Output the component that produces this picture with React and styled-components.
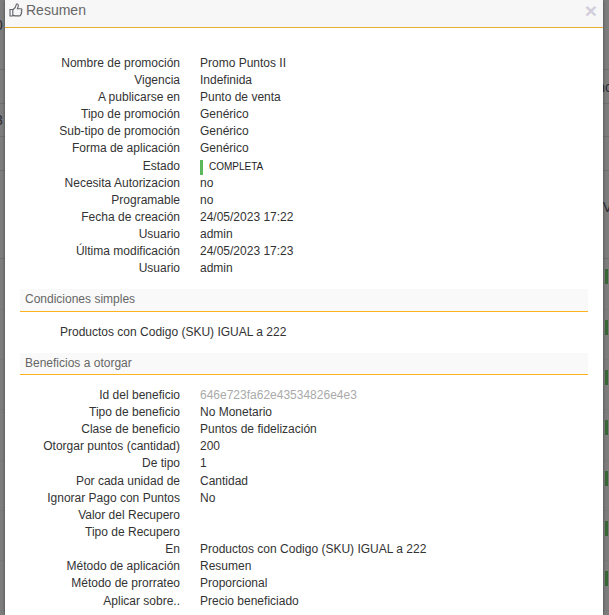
import React from 'react'
import styled, { createGlobalStyle } from 'styled-components'

const GlobalStyle = createGlobalStyle`
  html, body {
    margin: 0;
    padding: 0;
    height: 100%;
    overflow: hidden;
    background: #7d7d7d;
  }
`

const generalRows = [
  ['Nombre de promoción', 'Promo Puntos II'],
  ['Vigencia', 'Indefinida'],
  ['A publicarse en', 'Punto de venta'],
  ['Tipo de promoción', 'Genérico'],
  ['Sub-tipo de promoción', 'Genérico'],
  ['Forma de aplicación', 'Genérico'],
  ['Estado', 'COMPLETA', 'status'],
  ['Necesita Autorizacion', 'no'],
  ['Programable', 'no'],
  ['Fecha de creación', '24/05/2023 17:22'],
  ['Usuario', 'admin'],
  ['Última modificación', '24/05/2023 17:23'],
  ['Usuario', 'admin'],
]

const benefitRows = [
  ['Id del beneficio', '646e723fa62e43534826e4e3', 'muted'],
  ['Tipo de beneficio', 'No Monetario'],
  ['Clase de beneficio', 'Puntos de fidelización'],
  ['Otorgar puntos (cantidad)', '200'],
  ['De tipo', '1'],
  ['Por cada unidad de', 'Cantidad'],
  ['Ignorar Pago con Puntos', 'No'],
  ['Valor del Recupero', ''],
  ['Tipo de Recupero', ''],
  ['En', 'Productos con Codigo (SKU) IGUAL a 222'],
  ['Método de aplicación', 'Resumen'],
  ['Método de prorrateo', 'Proporcional'],
  ['Aplicar sobre..', 'Precio beneficiado'],
]

// the list page behind the dialog, only its edges stay visible
const backRows = [
  { height: 70, left: '0', lift: 20 },
  { height: 34, right: 'nc' },
  { height: 33, left: '3' },
  { height: 34 },
  { height: 88, right: 'V', lift: 16 },
  { height: 51, chip: true },
  { height: 50, chip: true },
  { height: 50, chip: true },
  { height: 51, chip: true },
  { height: 50, chip: true },
  { height: 50, chip: true },
  { height: 50, chip: true },
]

function InfoList({ rows }) {
  return (
    <List>
      {rows.map(([label, value, kind], i) => (
        <Row key={i}>
          <Label>{label}</Label>
          {kind === 'status' ? (
            <Status>{value}</Status>
          ) : (
            <Value $muted={kind === 'muted'}>{value}</Value>
          )}
        </Row>
      ))}
    </List>
  )
}

function ThumbIcon() {
  return (
    <svg width="14" height="14" viewBox="0 0 14 14" fill="none" stroke="#5f6368" strokeWidth="1.1">
      <path d="M1 6.500h2.800v6.500H1z" />
      <path d="M3.800 6.800c1.700-1.100 3.300-3.200 3.500-5.300.1-.9 2-.7 2 1.100 0 1.200-.5 2.300-.9 3.100h3.400c1.300 0 1.500 1.500.7 1.900.6.500.5 1.600-.2 1.900.4.600.2 1.500-.5 1.800.2.800-.3 1.600-1.300 1.600H6.700c-1.100 0-1.700-.5-2.900-.6" />
    </svg>
  )
}

export default function App() {
  return (
    <Page>
      <GlobalStyle />
      <Backdrop>
        {backRows.map((r, i) => (
          <BackRow key={i} $height={r.height} $lift={r.lift} $faint={r.chip}>
            <BackText>{r.left}</BackText>
            {r.chip ? <Chip /> : <BackText $right>{r.right}</BackText>}
          </BackRow>
        ))}
      </Backdrop>
      <Modal>
        <Header>
          <Title><ThumbIcon />Resumen</Title>
          <Close>×</Close>
        </Header>
        <Body>
          <InfoList rows={generalRows} />
          <Section>Condiciones simples</Section>
          <Condition>Productos con Codigo (SKU) IGUAL a 222</Condition>
          <Section $second>Beneficios a otorgar</Section>
          <InfoList rows={benefitRows} />
        </Body>
      </Modal>
    </Page>
  )
}

const Page = styled.div`
  position: relative;
  height: 615px;
  overflow: hidden;
  font-family: "Liberation Sans", Roboto, sans-serif;
`

const Backdrop = styled.div`
  display: flex;
  flex-direction: column;
`

const BackRow = styled.div`
  height: ${(p) => p.$height}px;
  box-sizing: border-box;
  padding-bottom: ${(p) => p.$lift || 0}px;
  display: flex;
  align-items: center;
  justify-content: space-between;
  border-bottom: 1px solid ${(p) => (p.$faint ? '#787878' : '#6f6f6f')};
`

const BackText = styled.span`
  font-size: 14px;
  color: #2c2c33;
  margin-left: ${(p) => (p.$right ? '0' : '-5px')};
  margin-right: ${(p) => (p.$right ? '-3px' : '0')};
`

const Chip = styled.span`
  align-self: flex-start;
  width: 3px;
  height: 15px;
  margin: 10px 1px 0 auto;
  background: #3a6637;
`

const Modal = styled.div`
  position: absolute;
  top: 0;
  left: 5px;
  width: 598px;
  height: 615px;
  background: #fff;
  box-shadow: 0 0 3px rgba(0, 0, 0, 0.45);
  color: #333;
  overflow: hidden;
`

const Header = styled.div`
  height: 25px;
  display: flex;
  align-items: flex-start;
  justify-content: space-between;
  padding: 2px 6px 0 4px;
  background: #f7f7f7;
  border-bottom: 1px solid #e8ae2e;
`

const Title = styled.div`
  display: flex;
  align-items: center;
  gap: 3px;
  font-size: 14px;
  line-height: 16px;
  color: #666;
`

const Close = styled.span`
  font-size: 21px;
  font-weight: 700;
  line-height: 18px;
  color: #d2cedb;
`

const Body = styled.div`
  padding: 26.700px 15px 0;
`

const List = styled.div`
  display: flex;
  flex-direction: column;
`

const Row = styled.div`
  display: grid;
  grid-template-columns: 160px 1fr;
  column-gap: 20px;
  align-items: center;
  font-size: 12px;
  line-height: 1.42857;
`

const Label = styled.div`
  text-align: right;
  white-space: nowrap;
`

const Value = styled.div`
  white-space: nowrap;
  min-height: 17px;
  color: ${(p) => (p.$muted ? '#aaa' : '#333')};
`

const Status = styled.div`
  align-self: start;
  height: 15px;
  margin-top: 2px;
  line-height: 13px;
  border-left: 3px solid #5cb85c;
  padding-left: 6px;
  font-size: 10px;
  color: #222;
`

const Section = styled.div`
  height: ${(p) => (p.$second ? '22px' : '23px')};
  line-height: 20px;
  margin-top: ${(p) => (p.$second ? '0' : '11.800px')};
  margin-bottom: ${(p) => (p.$second ? '11.500px' : '0')};
  padding-left: 5px;
  box-sizing: border-box;
  background: #f9f9f9;
  border-bottom: 1px solid #fcb322;
  font-size: 12px;
  color: #666;
`

const Condition = styled.div`
  padding: 12px 0 12px 40px;
  font-size: 12px;
  line-height: 17px;
`
